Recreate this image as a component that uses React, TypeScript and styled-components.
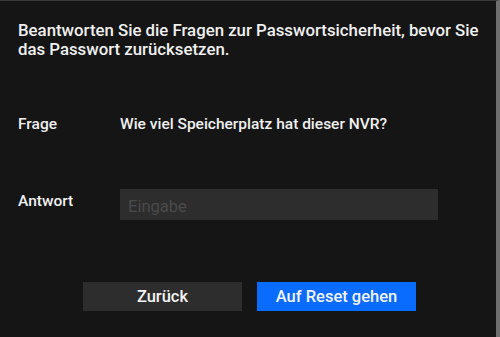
import React from "react";
import styled, { createGlobalStyle } from "styled-components";

const GlobalStyle = createGlobalStyle`
  html, body {
    margin: 0;
    padding: 0;
    background: #161616;
  }
  * {
    box-sizing: border-box;
  }
`;

const Dialog = styled.div`
  width: 500px;
  height: 337px;
  background: #151515;
  border-top: 1px solid #3a3a3a;
  border-right: 4px solid #6e6e6e;
  font-family: Roboto, "Liberation Sans", sans-serif;
  color: #f0f0f0;
  padding: 20px 6px 0 18px;
  display: flex;
  flex-direction: column;
`;

const Intro = styled.p`
  margin: 0;
  font-size: 16.8px;
  font-weight: 500;
  line-height: 19px;
`;

const Row = styled.div<{ $top: number }>`
  display: flex;
  align-items: flex-start;
  margin-top: ${p => p.$top}px;
`;

const Label = styled.div`
  width: 102px;
  font-size: 15.5px;
  font-weight: 500;
  line-height: 18px;
`;

const Question = styled.div`
  font-size: 15.5px;
  font-weight: 500;
  line-height: 18px;
`;

const Input = styled.input`
  width: 318px;
  height: 31px;
  margin-top: -3px;
  border: none;
  outline: none;
  background: #2d2d2d;
  color: #ddd;
  padding: 3px 8px 0 8px;
  font-family: Roboto, "Liberation Sans", sans-serif;
  font-size: 16.5px;
  &::placeholder {
    color: #4a4a4a;
  }
`;

const Buttons = styled.div`
  display: flex;
  justify-content: flex-start;
  gap: 15px;
  margin-top: 62px;
  padding-left: 65px;
`;

const Button = styled.button<{ $primary?: boolean }>`
  width: 159px;
  height: 29px;
  border: none;
  background: ${p => (p.$primary ? "#0a6cff" : "#2d2d2d")};
  color: #f4f4f4;
  font-family: Roboto, "Liberation Sans", sans-serif;
  font-size: 16.5px;
  font-weight: 500;
  padding: 0;
  cursor: pointer;
`;

const App: React.FC = () => (
  <>
    <GlobalStyle />
    <Dialog>
      <Intro>
        Beantworten Sie die Fragen zur Passwortsicherheit, bevor Sie
        <br />
        das Passwort zurücksetzen.
      </Intro>
      <Row $top={56}>
        <Label>Frage</Label>
        <Question>Wie viel Speicherplatz hat dieser NVR?</Question>
      </Row>
      <Row $top={59}>
        <Label>Antwort</Label>
        <Input placeholder="Eingabe" />
      </Row>
      <Buttons>
        <Button>Zurück</Button>
        <Button $primary>Auf Reset gehen</Button>
      </Buttons>
    </Dialog>
  </>
);

export default App;
